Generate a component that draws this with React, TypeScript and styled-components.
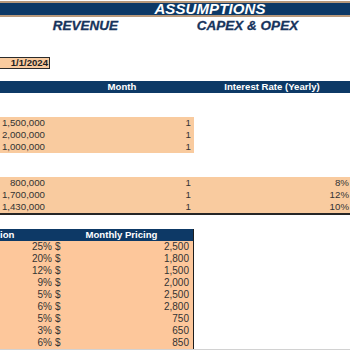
import React from 'react';
import styled, { createGlobalStyle } from 'styled-components';

const NAVY = '#0d3966';
const TAN = '#b8997b';
const PEACH = '#f9cb9f';
const PEACH_DEEP = '#fdc79b';
const INK = '#333333';

const GlobalStyle = createGlobalStyle`
  html, body {
    margin: 0;
    padding: 0;
    background: #ffffff;
  }
  body {
    font-family: "Liberation Sans", Arial, sans-serif;
    color: ${INK};
  }
`;

const revenueRows = [
  { amount: '1,500,000', month: '1' },
  { amount: '2,000,000', month: '1' },
  { amount: '1,000,000', month: '1' },
];

const capexRows = [
  { amount: '800,000', month: '1', rate: '8%' },
  { amount: '1,700,000', month: '1', rate: '12%' },
  { amount: '1,430,000', month: '1', rate: '10%' },
];

const pricingRows = [
  { share: '25%', price: '2,500' },
  { share: '20%', price: '1,800' },
  { share: '12%', price: '1,500' },
  { share: '9%', price: '2,000' },
  { share: '5%', price: '2,500' },
  { share: '6%', price: '2,800' },
  { share: '5%', price: '750' },
  { share: '3%', price: '650' },
  { share: '6%', price: '850' },
];

const App = () => {
  return (
    <Sheet>
      <GlobalStyle />
      <Banner>ASSUMPTIONS</Banner>
      <SubHeads>
        <SubHead>REVENUE</SubHead>
        <SubHead>CAPEX &amp; OPEX</SubHead>
      </SubHeads>
      <Blank $h={24} />
      <DateCell>1/1/2024</DateCell>
      <Blank $h={12} />
      <HeaderBar>
        <span />
        <span>Month</span>
        <span>Interest Rate (Yearly)</span>
      </HeaderBar>
      <Blank $h={24} />
      <Block $wide={false}>
        {revenueRows.map((r, i) => (
          <Row key={i}>
            <Amount>{r.amount}</Amount>
            <MonthCell>{r.month}</MonthCell>
          </Row>
        ))}
      </Block>
      <Blank $h={24} />
      <Block $wide>
        {capexRows.map((r, i) => (
          <Row key={i}>
            <Amount>{r.amount}</Amount>
            <MonthCell>{r.month}</MonthCell>
            <Rate>{r.rate}</Rate>
          </Row>
        ))}
      </Block>
      <Blank $h={14} />
      <PricingTable>
        <PricingHead>
          <span>ion</span>
          <span>Monthly Pricing</span>
        </PricingHead>
        {pricingRows.map((r, i) => (
          <PricingRow key={i}>
            <Share>{r.share}</Share>
            <Price>
              <span>$</span>
              <span>{r.price}</span>
            </Price>
          </PricingRow>
        ))}
      </PricingTable>
      <GridStrip>
        {[40, 96, 85, 75, 54].map((w, i) => (
          <StripCell key={i} style={{ width: w }} />
        ))}
      </GridStrip>
    </Sheet>
  );
};

const Sheet = styled.div`
  width: 350px;
  height: 350px;
  overflow: hidden;
  display: flex;
  flex-direction: column;
`;

const Banner = styled.div`
  margin-top: 1px;
  height: 12px;
  border-top: 2px solid ${TAN};
  border-bottom: 2px solid ${TAN};
  background: ${NAVY};
  color: #ffffff;
  font-weight: bold;
  font-style: italic;
  font-size: 15px;
  line-height: 12px;
  text-align: center;
  padding-left: 70px;
  letter-spacing: 0.1px;
`;

const SubHeads = styled.div`
  height: 16px;
  display: grid;
  grid-template-columns: 171px 153px;
  align-items: center;
`;

const SubHead = styled.div`
  text-align: center;
  color: #17345c;
  font-weight: bold;
  font-style: italic;
  font-size: 13.5px;
  line-height: 16px;
  padding-top: 1px;
  -webkit-text-stroke: 0.3px #17345c;
`;

const Blank = styled.div<{ $h: number }>`
  height: ${(p) => p.$h}px;
  flex-shrink: 0;
`;

const DateCell = styled.div`
  box-sizing: border-box;
  width: 50px;
  height: 12px;
  background: ${PEACH};
  border: 1px solid #2b2b2b;
  border-left: none;
  font-weight: bold;
  font-size: 9.6px;
  line-height: 10px;
  text-align: right;
  padding-right: 1px;
  color: #222;
`;

const HeaderBar = styled.div`
  height: 12px;
  background: ${NAVY};
  color: #ffffff;
  font-weight: bold;
  font-size: 9.6px;
  line-height: 12px;
  display: grid;
  grid-template-columns: 50px 144px 1fr;
  text-align: center;
`;

const Block = styled.div<{ $wide: boolean }>`
  width: ${(p) => (p.$wide ? '350px' : '194px')};
  background: ${PEACH};
  border-bottom: ${(p) => (p.$wide ? '2px solid #262626' : 'none')};
`;

const Row = styled.div`
  height: 12px;
  display: grid;
  grid-template-columns: 50px 144px 1fr;
  font-size: 9.7px;
  line-height: 12px;
  & > span {
    text-align: right;
  }
`;

const Amount = styled.span`
  padding-right: 5px;
`;

const MonthCell = styled.span`
  padding-right: 3px;
`;

const Rate = styled.span`
  padding-right: 1px;
`;

const PricingTable = styled.div`
  width: 193px;
  border-right: 1px solid #1e1e1e;
  background: ${PEACH_DEEP};
`;

const PricingHead = styled.div`
  height: 12px;
  background: ${NAVY};
  color: #ffffff;
  font-weight: bold;
  font-size: 9.6px;
  line-height: 12px;
  display: grid;
  grid-template-columns: 50px 1fr;
  & > span:last-child {
    text-align: center;
  }
`;

const PricingRow = styled.div`
  height: 12px;
  display: grid;
  grid-template-columns: 53px 1fr;
  font-size: 10px;
  line-height: 12px;
`;

const Share = styled.span`
  text-align: right;
  padding-right: 1px;
`;

const Price = styled.span`
  display: flex;
  justify-content: space-between;
  padding-left: 2px;
  padding-right: 4px;
`;

const GridStrip = styled.div`
  height: 3px;
  display: flex;
  background: #e7e7e7;
  border-top: 1px solid #d2d2d2;
`;

const StripCell = styled.div`
  box-sizing: border-box;
  height: 100%;
  border-right: 1px solid #c4c4c4;
`;

export default App;
